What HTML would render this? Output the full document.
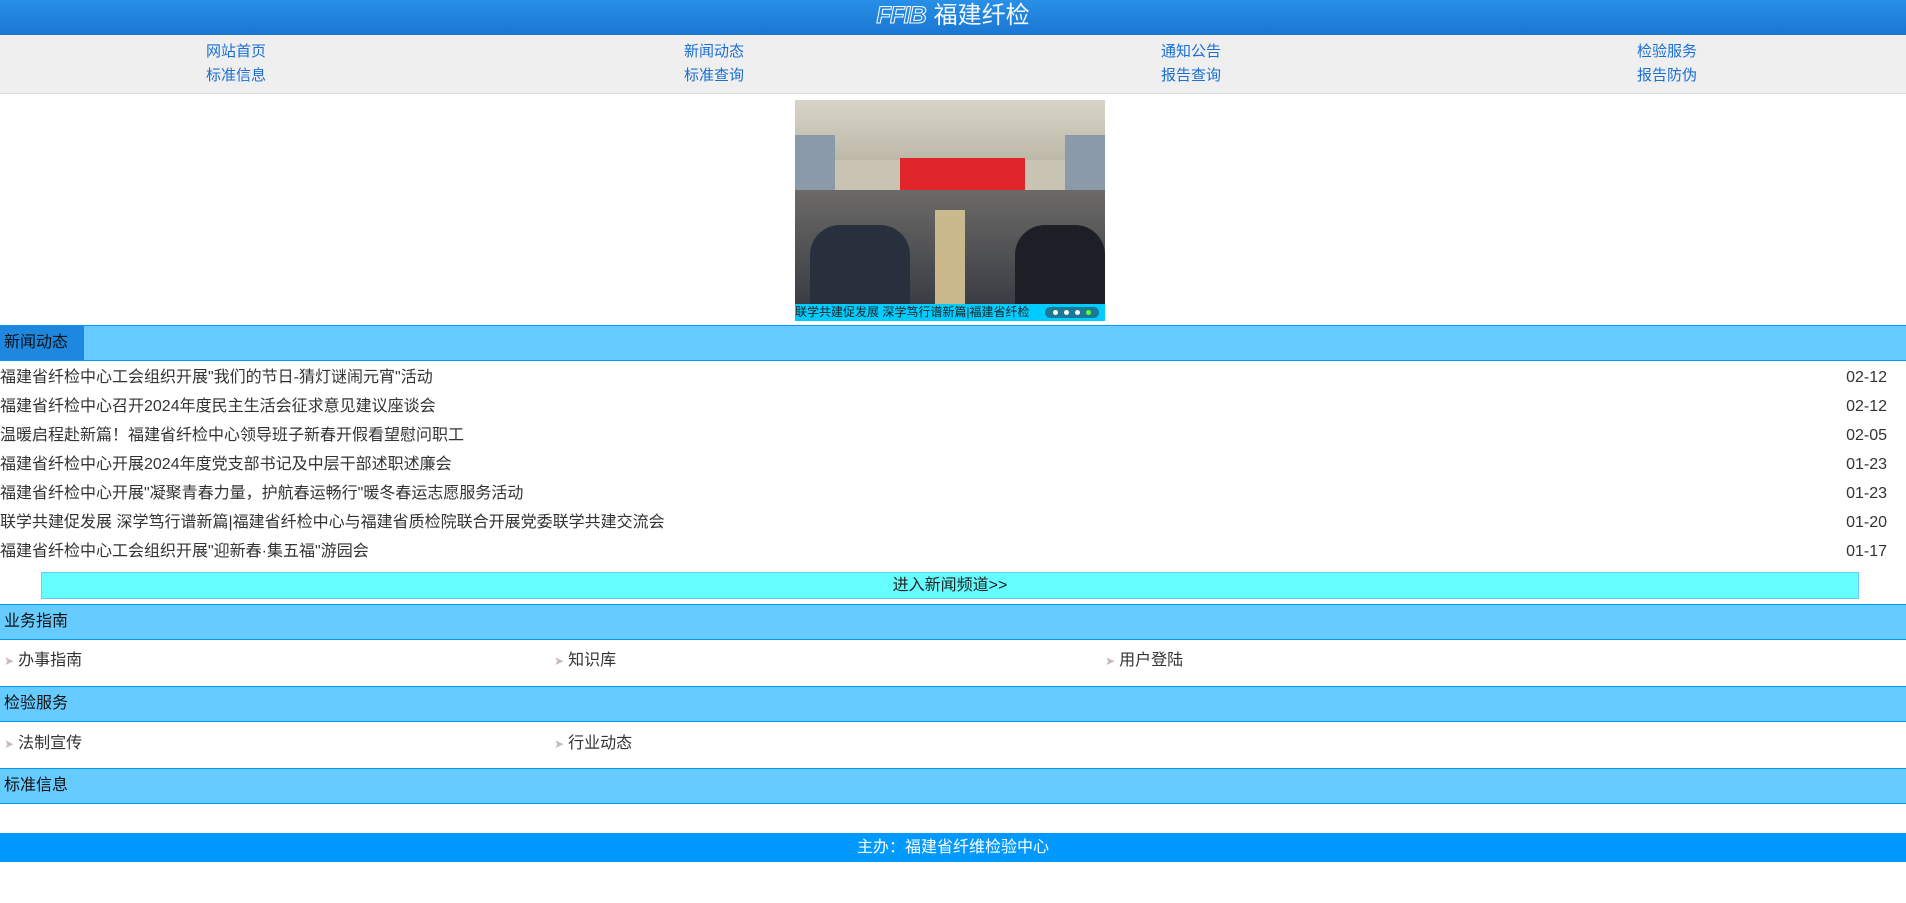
<!DOCTYPE html>
<html><head><meta charset="utf-8"><style>
*{margin:0;padding:0;box-sizing:border-box}
body{width:1906px;height:903px;background:#fff;font-family:"Liberation Sans","Noto Sans CJK SC",sans-serif;font-size:15px;color:#333;position:relative;overflow:hidden}
.hd{position:absolute;left:0;top:0;width:1906px;height:35px;background:linear-gradient(#2890e6,#1a76d2);text-align:center;color:#f4f8ff;font-size:24px;line-height:32px;font-style:normal}
.hd i{font-family:"Liberation Sans",sans-serif;font-weight:bold;font-style:italic;letter-spacing:-1px;margin-right:8px;-webkit-text-stroke:1px #fff;color:transparent}
.nav{position:absolute;top:35px;left:0;width:1906px;height:59px;background:#efefef;border-bottom:1px solid #ddd}
.nav a{position:absolute;width:476px;text-align:center;color:#1a6fd6;font-size:15px;text-decoration:none}
.img{position:absolute;left:795px;top:100px;width:310px;height:221px;overflow:hidden;background:#c9c3b4}
.bar{position:absolute;left:0;width:1906px;height:36px;background:#66ccff;border-top:1px solid #0099ff;border-bottom:1px solid #0099ff;color:#111;font-size:16px;line-height:33px;padding-left:4px}
.row{position:absolute;left:0;width:1906px;font-size:16px;line-height:20px}
.row .d{position:absolute;right:19px;top:0}
.it{position:absolute;font-size:16px;color:#333}
.it b{color:#c8b8b8;font-weight:normal;font-size:12px;margin-right:4px}
</style></head><body>
<div class="hd"><i>FFIB</i>福建纤检</div>
<div class="nav">
<a style="left:-2px;top:5px">网站首页</a><a style="left:-2px;top:29px">标准信息</a>
<a style="left:476px;top:5px">新闻动态</a><a style="left:476px;top:29px">标准查询</a>
<a style="left:953px;top:5px">通知公告</a><a style="left:953px;top:29px">报告查询</a>
<a style="left:1429px;top:5px">检验服务</a><a style="left:1429px;top:29px">报告防伪</a>
</div>
<div class="img">
<div style="position:absolute;left:0;top:0;width:310px;height:60px;background:linear-gradient(#d8d4c8,#bdb8a8)"></div>
<div style="position:absolute;left:0;top:35px;width:40px;height:80px;background:#8a9aa8"></div>
<div style="position:absolute;left:270px;top:35px;width:40px;height:80px;background:#8a9aa8"></div>
<div style="position:absolute;left:105px;top:58px;width:125px;height:32px;background:#e0262b"></div>
<div style="position:absolute;left:0;top:90px;width:310px;height:114px;background:linear-gradient(#6c6a68,#3a3d44)"></div>
<div style="position:absolute;left:140px;top:110px;width:30px;height:94px;background:#c9b98c"></div>
<div style="position:absolute;left:15px;top:125px;width:100px;height:80px;background:#27303c;border-radius:30px 30px 0 0"></div>
<div style="position:absolute;left:220px;top:125px;width:90px;height:80px;background:#1c1f26;border-radius:30px 30px 0 0"></div>
<div style="position:absolute;left:0;top:204px;width:310px;height:17px;background:#00ccff;color:#222;font-size:12px;line-height:17px;white-space:nowrap">联学共建促发展 深学笃行谱新篇|福建省纤检
<span style="position:absolute;left:250px;top:3px;width:54px;height:11px;border-radius:6px;background:#1a7a94"></span>
<span style="position:absolute;left:258px;top:6px;width:5px;height:5px;border-radius:50%;background:#fff;box-shadow:11px 0 #fff,22px 0 #fff,33px 0 #66ff33"></span></div>
</div>
<div class="bar" style="top:325px;padding-left:0"><span style="display:inline-block;width:84px;height:34px;background:#1e88e0;padding-left:4px;color:#111">新闻动态</span></div>
<div class="row" style="top:368px">福建省纤检中心工会组织开展"我们的节日-猜灯谜闹元宵"活动<span class="d">02-12</span></div>
<div class="row" style="top:397px">福建省纤检中心召开2024年度民主生活会征求意见建议座谈会<span class="d">02-12</span></div>
<div class="row" style="top:426px">温暖启程赴新篇！福建省纤检中心领导班子新春开假看望慰问职工<span class="d">02-05</span></div>
<div class="row" style="top:455px">福建省纤检中心开展2024年度党支部书记及中层干部述职述廉会<span class="d">01-23</span></div>
<div class="row" style="top:484px">福建省纤检中心开展"凝聚青春力量，护航春运畅行"暖冬春运志愿服务活动<span class="d">01-23</span></div>
<div class="row" style="top:513px">联学共建促发展 深学笃行谱新篇|福建省纤检中心与福建省质检院联合开展党委联学共建交流会<span class="d">01-20</span></div>
<div class="row" style="top:542px">福建省纤检中心工会组织开展"迎新春·集五福"游园会<span class="d">01-17</span></div>
<div style="position:absolute;left:41px;top:572px;width:1818px;height:27px;background:#66ffff;border:1px solid #66ccff;text-align:center;font-size:16px;line-height:25px;color:#222">进入新闻频道&gt;&gt;</div>
<div class="bar" style="top:604px">业务指南</div>
<div class="it" style="left:4px;top:646px"><b>➤</b>办事指南</div>
<div class="it" style="left:554px;top:646px"><b>➤</b>知识库</div>
<div class="it" style="left:1105px;top:646px"><b>➤</b>用户登陆</div>
<div class="bar" style="top:686px">检验服务</div>
<div class="it" style="left:4px;top:729px"><b>➤</b>法制宣传</div>
<div class="it" style="left:554px;top:729px"><b>➤</b>行业动态</div>
<div class="bar" style="top:768px">标准信息</div>
<div style="position:absolute;left:0;top:833px;width:1906px;height:29px;background:#0099ff;color:#fff;text-align:center;font-size:16px;line-height:29px">主办：福建省纤维检验中心</div>
</body></html>
